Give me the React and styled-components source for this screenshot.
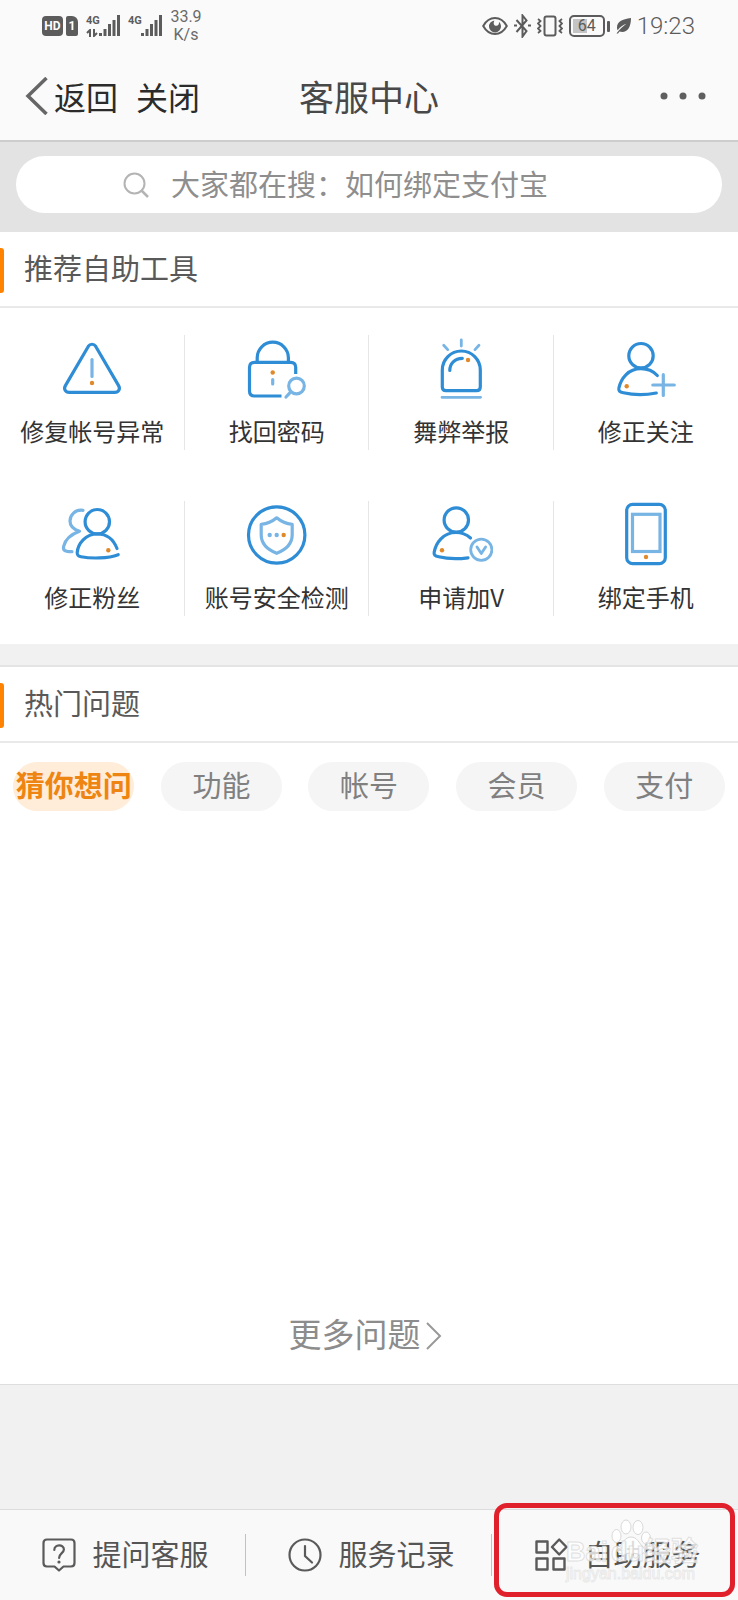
import React from 'react';
import styled, { createGlobalStyle } from 'styled-components';

const BLUE = '#2f8dd6';
const LIGHT = '#78b5e4';
const ORANGE = '#e0892a';

const GlobalStyle = createGlobalStyle`
  *, *::before, *::after { box-sizing: border-box; }
  body {
    margin: 0;
    background: #f1f1f1;
    color: #333;
    font-family: "Noto Sans CJK SC", "Noto Sans", sans-serif;
  }
  button, input { font: inherit; color: inherit; border: 0; background: none; padding: 0; margin: 0; }
  button { cursor: pointer; white-space: nowrap; }
  h1, h2, p { margin: 0; font-weight: 400; }
`;

const Page = styled.div`
  min-height: 100vh;
  display: flex;
  flex-direction: column;
`;

const Header = styled.header`
  background: #fafafa;
  border-bottom: 2px solid #cdcdcd;
`;

const StatusBar = styled.div`
  height: 52px;
  padding: 0 43px 0 42px;
  display: flex;
  align-items: center;
  justify-content: space-between;
  color: #5c5c5c;
  font-family: Roboto, "Noto Sans", sans-serif;
`;

const StatusGroup = styled.div`
  display: flex;
  align-items: center;
  gap: ${(p) => p.$gap}px;
  svg { display: block; }
`;

const Tag = styled.span`
  width: ${(p) => p.$width}px;
  height: 20px;
  border-radius: ${(p) => p.$radius};
  background: #5c5c5c;
  color: #fff;
  font-size: 12px;
  font-weight: 700;
  line-height: 20px;
  text-align: center;
`;

const Signal = styled.span`
  display: flex;
  height: 22px;
  align-items: flex-start;
  font-size: 11px;
  line-height: 11px;
  font-weight: 700;
`;

const SignalLabel = styled.span`
  width: 13px;
  display: flex;
  flex-direction: column;
  gap: 3px;
`;

const Speed = styled.span`
  width: 32px;
  font-size: 16px;
  line-height: 18px;
  text-align: center;
  color: #6a6a6a;
`;

const Battery = styled.span`
  width: 36px;
  height: 22px;
  border: 2px solid #5c5c5c;
  border-radius: 5px;
  padding: 2px;
  font-size: 16px;
  line-height: 14px;
  text-align: center;
  background: linear-gradient(#c4c4c4, #c4c4c4) no-repeat 2px 2px / 14px 14px;
`;

const Clock = styled.span`
  font-size: 24px;
  line-height: 30px;
  font-weight: 300;
`;

const NavBar = styled.nav`
  height: 88px;
  padding: 0 25px;
  display: grid;
  grid-template-columns: 1fr auto 1fr;
  align-items: center;
`;

const NavActions = styled.div`
  display: flex;
  gap: 18px;
  font-size: 32px;
  line-height: 42px;
  color: #2b2b2b;
`;

const BackButton = styled.button`
  display: flex;
  align-items: center;
  gap: 5px;
`;

const Title = styled.h1`
  font-size: 35px;
  line-height: 44px;
  color: #484848;
`;

const MoreButton = styled.button`
  justify-self: end;
  display: flex;
  padding: 16px 6px;
`;

const SearchBand = styled.div`
  padding: 14px 16px 19px;
  background: #e3e3e3;
`;

const SearchBox = styled.label`
  height: 57px;
  padding: 0 107px;
  border-radius: 29px;
  background: #fff;
  display: flex;
  align-items: center;
  gap: 22px;
`;

const SearchInput = styled.input`
  flex: 1;
  min-width: 0;
  height: 48px;
  padding-bottom: 4px;
  font-size: 29px;
  outline: none;
  &::placeholder { color: #8e8e8e; opacity: 1; }
`;

const Panel = styled.section`
  background: #fff;
  border-bottom: 1px solid #dedede;
`;

const ToolsPanel = styled(Panel)`
  border-bottom: 0;
`;

const Band = styled.div`
  height: 23px;
  background: #f1f1f1;
  border-bottom: 2px solid #e4e4e4;
`;

const SectionHead = styled.div`
  height: 76px;
  border-bottom: 2px solid #e9e9e9;
  display: flex;
  align-items: flex-start;
  gap: 20px;
  padding-top: 16px;
  &::before {
    content: "";
    width: 4px;
    height: 45px;
    border-radius: 0 3px 3px 0;
    background: #ff8200;
  }
`;

const SectionTitle = styled.h2`
  font-size: 29px;
  line-height: 38px;
  color: #595959;
`;

const ToolGrid = styled.div`
  display: grid;
  grid-template-columns: repeat(4, 1fr);
  grid-auto-rows: 166px;
  padding-bottom: 4px;
`;

const Tool = styled.button`
  display: flex;
  flex-direction: column;
  align-items: center;
  gap: 13px;
  padding-top: 28px;
  font-size: 24px;
  line-height: 36px;
  background: linear-gradient(#e6e6e6, #e6e6e6) no-repeat right 27px / 1px 115px;
  &:nth-child(4n) { background: none; }
`;

const Tabs = styled.div`
  display: grid;
  grid-template-columns: repeat(5, 1fr);
  justify-items: center;
  padding-top: 19px;
`;

const Tab = styled.button`
  width: 121px;
  height: 49px;
  padding-bottom: 5px;
  border-radius: 25px;
  font-size: 29px;
  line-height: 44px;
  font-weight: ${(p) => (p.$active ? 700 : 400)};
  color: ${(p) => (p.$active ? '#ee8512' : '#808080')};
  background: ${(p) => (p.$active ? '#ffecd9' : '#f5f5f6')};
`;

const Questions = styled.div`
  min-height: 500px;
`;

const MoreLink = styled.a`
  display: flex;
  align-items: center;
  justify-content: center;
  gap: 5px;
  padding: 0 8px 24px 0;
  font-size: 33px;
  line-height: 44px;
  color: #8c8c8c;
  text-decoration: none;
`;

const Label = styled.span`
  padding-bottom: 5px;
`;

const Footer = styled.footer`
  margin-top: auto;
  display: grid;
  grid-template-columns: repeat(3, 1fr);
  height: 91px;
  background: #f9f9f9;
  border-top: 1px solid #dcdcdc;
`;

const FooterItem = styled.div`
  position: relative;
  display: flex;
  background: linear-gradient(#c2c2c2, #c2c2c2) no-repeat right center / 1px 42px;
  &:last-child { background: none; }
`;

const FooterButton = styled.button`
  flex: 1;
  display: flex;
  align-items: center;
  justify-content: center;
  gap: 16px;
  padding-left: 5px;
  font-size: 29px;
  line-height: 42px;
  color: #555;
`;

const Highlight = styled.span`
  position: absolute;
  inset: -7px 3px 3px 2px;
  border: 5px solid #e0202a;
  border-radius: 13px;
  pointer-events: none;
`;

const Watermark = styled.div`
  position: absolute;
  top: 9px;
  right: 40px;
  width: 132px;
  pointer-events: none;
  color: rgba(255, 255, 255, 0.8);
  -webkit-text-stroke: 1px rgba(205, 205, 205, 0.6);
  font-family: "Liberation Sans", "Noto Sans CJK SC", sans-serif;
  white-space: nowrap;
  svg { display: block; margin-left: 45px; }
`;

const WatermarkBrand = styled.p`
  margin-top: -16px;
  font-size: 27px;
  line-height: 26px;
  font-weight: 700;
  display: flex;
  justify-content: space-between;
`;

const WatermarkSite = styled.p`
  font-size: 16px;
  line-height: 18px;
  -webkit-text-stroke: 1px rgba(205, 205, 205, 0.4);
`;

function ToolIcon({ children }) {
  return (
    <svg width="64" height="64" viewBox="0 0 64 64" fill="none" stroke={BLUE} strokeWidth="3.2" strokeLinecap="round" strokeLinejoin="round" aria-hidden="true">
      {children}
    </svg>
  );
}

const Dot = ({ x, y, color = ORANGE }) => <circle cx={x} cy={y} r="2.2" fill={color} stroke="none" />;

const icons = {
  warning: (
    <>
      <path d="M28.4 10.2 5.4 49.6c-2 3.4 0 6.8 3.8 6.8h45.6c3.8 0 5.8-3.4 3.8-6.8l-23-39.4c-1.7-2.6-5.5-2.6-7.2 0z" />
      <path d="M32 23.5v17" stroke={LIGHT} />
      <Dot x={32} y={47} />
    </>
  ),
  lock: (
    <>
      <path d="M12.2 26V21.8a15.6 15.6 0 0 1 31.2 0V26" />
      <path d="M50.7 38V31.3q0-5-5-5H9.5q-5 0-5 5V55q0 5 5 5H36.5" strokeLinecap="butt" />
      <circle cx="51.5" cy="50" r="7.8" stroke={LIGHT} />
      <path d="M46 55.6 41 61M27.7 43.5v4.5" stroke={LIGHT} />
      <Dot x={27.7} y={36.5} />
    </>
  ),
  siren: (
    <>
      <path d="M13.3 34a19 19 0 0 1 38 0v17q0 3.7-3.7 3.7H17q-3.7 0-3.7-3.7z" />
      <path d="M20.8 34.5c0-7 5-12 12.5-12.2" />
      <path d="M13 61.3h38.6M32.3 4v6M14.7 9.3l4 4.3M50 9.3l-4 4.3" stroke={LIGHT} strokeWidth="2.8" />
      <Dot x={39} y={24} />
    </>
  ),
  follow: (
    <>
      <circle cx="27" cy="19.7" r="12.2" />
      <path d="M43.3 39.5C39 35 33 32.7 27 32.7 14 32.7 7 42.5 4.9 52c-.6 2.7.6 4 4.5 4.800 10 2.300 23 2.200 32.900.2" />
      <path d="M49.3 38.5v21M38.8 49h21.5" stroke={LIGHT} />
      <Dot x={12.7} y={50.3} />
    </>
  ),
  fans: (
    <>
      <path d="M23 8.3C15 7.5 10 13 10 19c0 5 4 8.5 9.5 10.3C12 32 5.5 36 3.6 44.5c-.8 3.8 1.4 5.2 8.400 5.200" stroke={LIGHT} />
      <circle cx="37.3" cy="19.7" r="12.2" />
      <path d="M57 46.5C53.5 37.5 46.5 32 37.5 32 25.5 32 18 41.5 17.2 50.5c-.2 2.7.8 3.6 3.8 4.200 10 2 27 2 37.200-2" />
      <Dot x={48.3} y={48.3} />
    </>
  ),
  shield: (
    <>
      <circle cx="31.7" cy="33" r="28.2" />
      <path d="M31.7 15.8c4.5 3.8 9.5 6 15.5 6.500v10.500c0 9-6.500 15-15.500 18.500-9-3.500-15.500-9.500-15.500-18.500V22.300c6-.5 11-2.700 15.500-6.500z" stroke={LIGHT} />
      <Dot x={24.7} y={33} color={LIGHT} />
      <Dot x={31.7} y={33} color={LIGHT} />
      <Dot x={38.7} y={33} />
    </>
  ),
  verify: (
    <>
      <circle cx="27.3" cy="18" r="12.2" />
      <path d="M41.5 36C37.5 32.5 32.5 30.5 27 30.5 14 30.5 7 41 5.2 50c-.6 2.700.6 4 4.500 4.800 9 2.200 19.300 2.300 29.300 1" />
      <circle cx="52.3" cy="47.7" r="10.6" stroke={LIGHT} strokeWidth="2.8" />
      <path d="m48 45 4.300 6.500L56.600 45" stroke={LIGHT} strokeWidth="2.8" />
      <Dot x={13} y={48.3} />
    </>
  ),
  phone: (
    <>
      <rect x="12.7" y="2.3" width="38.6" height="59.4" rx="6" />
      <rect x="18.5" y="12.3" width="27.5" height="37.2" stroke={LIGHT} strokeLinejoin="miter" />
      <Dot x={32} y={55} />
    </>
  ),
};

const tools = [
  ['warning', '修复帐号异常'],
  ['lock', '找回密码'],
  ['siren', '舞弊举报'],
  ['follow', '修正关注'],
  ['fans', '修正粉丝'],
  ['shield', '账号安全检测'],
  ['verify', '申请加V'],
  ['phone', '绑定手机'],
];

const tabs = ['猜你想问', '功能', '帐号', '会员', '支付'];

const Bars = () => (
  <svg width="21" height="22" viewBox="0 0 21 22" fill="#5c5c5c" aria-hidden="true">
    <rect x="0" y="18" width="3" height="3" />
    <rect x="4.5" y="14" width="3" height="7" />
    <rect x="9" y="9" width="3" height="12" />
    <rect x="13.5" y="5" width="3" height="16" />
    <rect x="18" y="0" width="3" height="21" />
  </svg>
);

export default function App() {
  return (
    <Page>
      <GlobalStyle />
      <Header>
        <StatusBar>
          <StatusGroup $gap={8}>
            <StatusGroup $gap={3}>
              <Tag $width={21} $radius="4px">HD</Tag>
              <Tag $width={12} $radius="2px 6px 2px 2px">1</Tag>
            </StatusGroup>
            <Signal>
              <SignalLabel>
                4G
                <svg width="12" height="8" viewBox="0 0 12 8" fill="none" stroke="#5c5c5c" strokeWidth="2" aria-hidden="true">
                  <path d="M4 8V1L1 4M8 0v7l3-3" />
                </svg>
              </SignalLabel>
              <Bars />
            </Signal>
            <Signal>
              <SignalLabel>4G</SignalLabel>
              <Bars />
            </Signal>
            <Speed>33.9 K/s</Speed>
          </StatusGroup>
          <StatusGroup $gap={6}>
            <svg width="26" height="20" viewBox="0 0 26 20" fill="none" stroke="#5c5c5c" strokeWidth="2" aria-hidden="true">
              <path d="M1.2 10C4 5 8 2 13 2s9 3 11.800 8C22 15 18 18 13 18S4 15 1.200 10z" />
              <path d="M12.5 4.5a6 6 0 1 0 6.500 5.500 6 6 0 0 0-2-4.200c.3 3-1.200 4.400-3.400 4-2-.4-2.500-3-1.100-5.300z" fill="#5c5c5c" stroke="none" />
            </svg>
            <svg width="17" height="24" viewBox="0 0 17 24" fill="none" stroke="#5c5c5c" strokeWidth="2" aria-hidden="true">
              <path d="m2.500 6 10 11-4 5.500v-21l4 5-10 11.500M0 11.500h3M14 11.500h3" />
            </svg>
            <svg width="26" height="22" viewBox="0 0 26 22" fill="none" stroke="#5c5c5c" strokeWidth="2" aria-hidden="true">
              <rect x="7.5" y="1.5" width="11" height="19" rx="2" />
              <path d="m1 4 2.500 2L1 8.500 3.500 11 1 13.500 3.500 16 1 18M25 4l-2.500 2L25 8.500 22.500 11l2.500 2.500-2.500 2.500 2.500 2" strokeWidth="1.8" />
            </svg>
            <StatusGroup $gap={2}>
              <Battery>64</Battery>
              <svg width="3" height="11" aria-hidden="true"><rect width="3" height="11" rx="1" fill="#5c5c5c" /></svg>
            </StatusGroup>
            <svg width="15" height="16" viewBox="0 0 15 16" aria-hidden="true">
              <path d="M15 0C6 1 1 4 1 9.500c0 1 .2 2 .6 2.700C4 9 7 7 10.500 5.800 7 8.500 3.500 11 .5 15.500H2l1.500-2C10 15.500 15 11 15 0z" fill="#5c5c5c" />
            </svg>
            <Clock>19:23</Clock>
          </StatusGroup>
        </StatusBar>
        <NavBar>
          <NavActions>
            <BackButton type="button">
              <svg width="24" height="38" viewBox="0 0 24 38" fill="none" stroke="#666" strokeWidth="3.5" aria-hidden="true">
                <path d="M21.5 1 3 19l18.500 18" />
              </svg>
              返回
            </BackButton>
            <button type="button">关闭</button>
          </NavActions>
          <Title>客服中心</Title>
          <MoreButton type="button" aria-label="更多">
            <svg width="48" height="8" viewBox="0 0 48 8" fill="#5f5f5f" aria-hidden="true">
              <circle cx="5" cy="4" r="3.5" />
              <circle cx="24" cy="4" r="3.5" />
              <circle cx="43" cy="4" r="3.5" />
            </svg>
          </MoreButton>
        </NavBar>
      </Header>

      <SearchBand>
        <SearchBox>
          <svg width="26" height="26" viewBox="0 0 26 26" fill="none" stroke="#b4b4b4" strokeWidth="2" aria-hidden="true">
            <circle cx="11.5" cy="11.5" r="10" />
            <path d="m18.500 18.500 6.500 6.500" strokeWidth="2.5" />
          </svg>
          <SearchInput type="text" aria-label="搜索" placeholder="大家都在搜：如何绑定支付宝" />
        </SearchBox>
      </SearchBand>

      <ToolsPanel>
        <SectionHead><SectionTitle>推荐自助工具</SectionTitle></SectionHead>
        <ToolGrid>
          {tools.map(([icon, label]) => (
            <Tool type="button" key={label}>
              <ToolIcon>{icons[icon]}</ToolIcon>
              {label}
            </Tool>
          ))}
        </ToolGrid>
      </ToolsPanel>

      <Band />

      <Panel>
        <SectionHead><SectionTitle>热门问题</SectionTitle></SectionHead>
        <Tabs>
          {tabs.map((label, i) => (
            <Tab type="button" key={label} $active={i === 0}>{label}</Tab>
          ))}
        </Tabs>
        <Questions />
        <MoreLink href="#more">
          <Label>更多问题</Label>
          <svg width="16" height="28" viewBox="0 0 16 28" fill="none" stroke="#999" strokeWidth="2" aria-hidden="true">
            <path d="m1 1 13 13L1 27" />
          </svg>
        </MoreLink>
      </Panel>

      <Footer>
        <FooterItem>
          <FooterButton type="button">
            <svg width="34" height="34" viewBox="0 0 34 34" fill="none" stroke="#5a5a5a" strokeWidth="2.2" strokeLinejoin="round" aria-hidden="true">
              <path d="M5 1.500h24q3.500 0 3.500 3.500v20q0 3.500-3.500 3.500h-7.500L17 32.500l-4.500-4H5q-3.500 0-3.500-3.500V5Q1.500 1.500 5 1.500z" />
              <path d="M12.300 12c0-6 9.600-6 9.600-.5 0 3.500-4.800 4-4.800 8.500" strokeLinecap="round" />
              <circle cx="17" cy="24" r="1.6" fill="#5a5a5a" stroke="none" />
            </svg>
            <Label>提问客服</Label>
          </FooterButton>
        </FooterItem>
        <FooterItem>
          <FooterButton type="button">
            <svg width="34" height="34" viewBox="0 0 34 34" fill="none" stroke="#5a5a5a" strokeWidth="2.2" strokeLinecap="round" aria-hidden="true">
              <circle cx="17" cy="17" r="15.5" />
              <path d="M17 8v10l7 6.500" />
            </svg>
            <Label>服务记录</Label>
          </FooterButton>
        </FooterItem>
        <FooterItem>
          <FooterButton type="button">
            <svg width="34" height="34" viewBox="0 0 34 34" fill="none" stroke="#5a5a5a" strokeWidth="2.4" strokeLinejoin="round" aria-hidden="true">
              <rect x="2.5" y="3.5" width="11" height="11" />
              <rect x="2.5" y="20.5" width="11" height="11" />
              <rect x="19.5" y="20.5" width="11" height="11" />
              <path d="m25.200 1.500 7.300 7.500-7.300 7.500L18 9z" />
            </svg>
            <Label>自助服务</Label>
          </FooterButton>
          <Watermark>
            <svg width="40" height="36" viewBox="0 0 40 36" fill="#fff" fillOpacity=".8" stroke="#d8d8d8" aria-hidden="true">
              <ellipse cx="5.5" cy="17" rx="4.5" ry="6.5" />
              <ellipse cx="15" cy="8" rx="5" ry="7" />
              <ellipse cx="27" cy="8.5" rx="5" ry="7" />
              <ellipse cx="35" cy="19" rx="4.5" ry="6" />
              <path d="M20 18c-6 0-8 6-12 10-3 4-1 7 4 7 3 0 5-1 8-1s5 1 9 1c5 0 6-4 3-7-4-4-6-10-12-10z" />
            </svg>
            <WatermarkBrand><span>Bai</span><span>du经验</span></WatermarkBrand>
            <WatermarkSite>jingyan.baidu.com</WatermarkSite>
          </Watermark>
          <Highlight />
        </FooterItem>
      </Footer>
    </Page>
  );
}
